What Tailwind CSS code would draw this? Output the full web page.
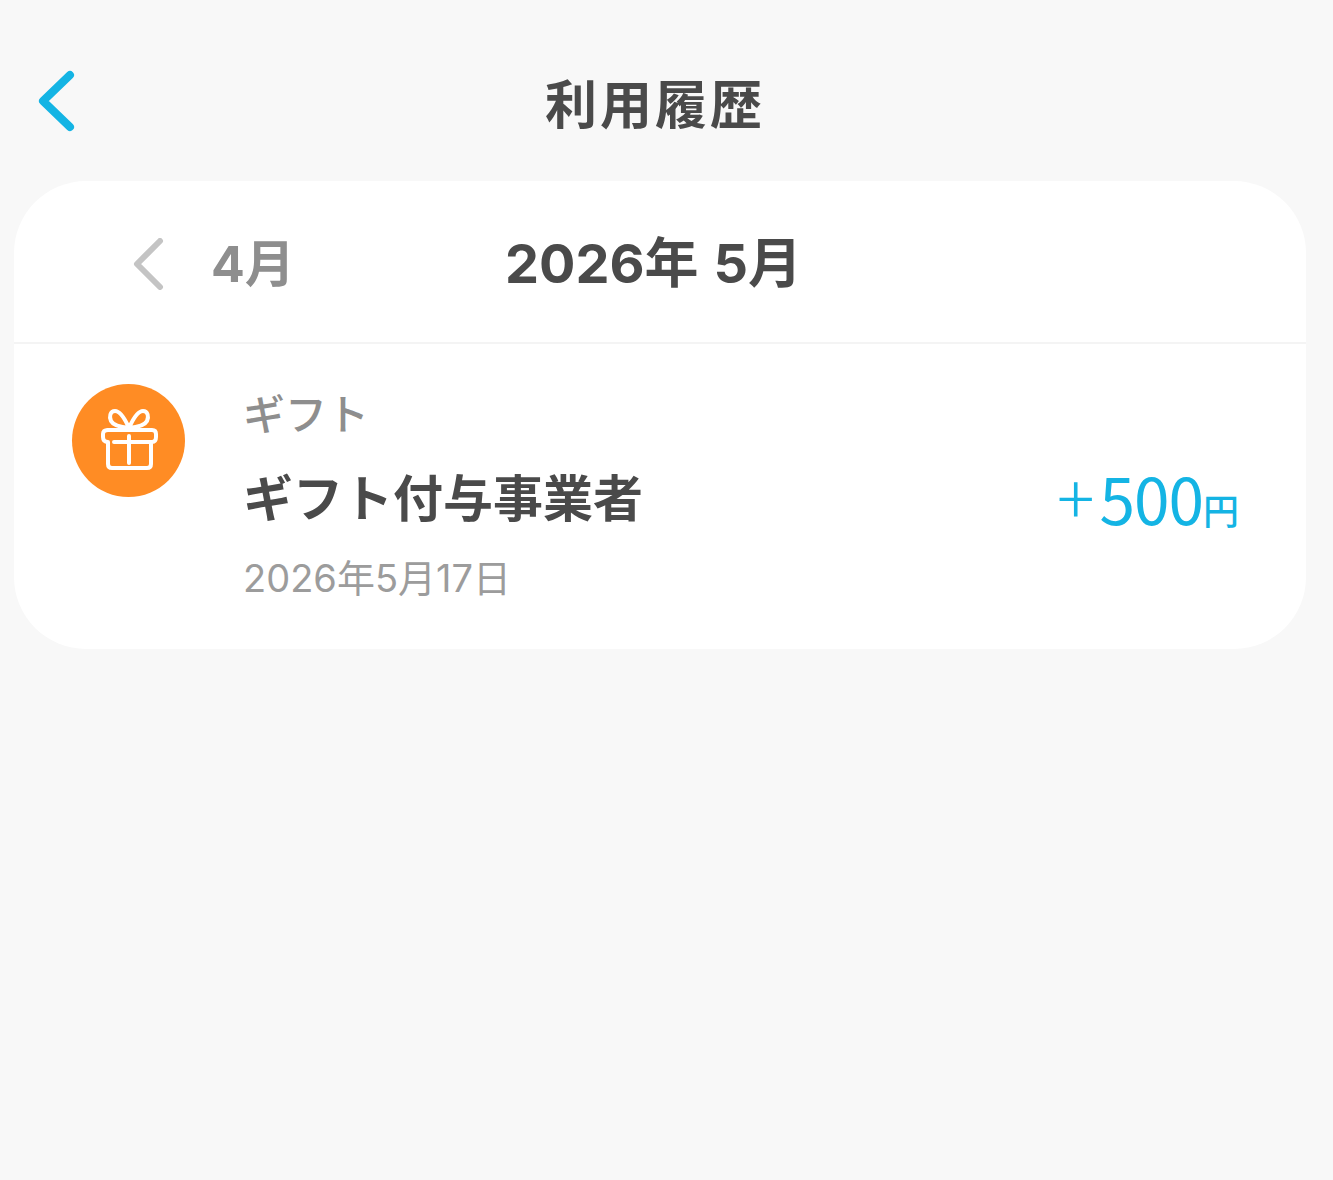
<!DOCTYPE html>
<html lang="ja">
<head>
  <meta charset="UTF-8">
  <meta name="viewport" content="width=device-width, initial-scale=1">
  <title>利用履歴</title>
  <script src="https://cdn.jsdelivr.net/npm/@tailwindcss/browser@4"></script>
</head>
<body class="bg-[#f8f8f8] font-['Inter','Noto_Sans_CJK_JP',sans-serif] text-[#4a4a4a] h-[1180px] overflow-hidden">

  <!-- Header -->
  <header class="relative h-[181px] pt-[71px] flex justify-center">
    <button class="absolute left-[38px] top-[70px]">
      <svg width="38" height="62" viewBox="0 0 38 62" fill="none" stroke="#14b4e4" stroke-width="8" stroke-linecap="round" stroke-linejoin="round"><path d="M32 5 L5 31 L32 57"/></svg>
    </button>
    <h1 class="text-[52px] leading-[70px] font-bold tracking-[3px] ml-[-23px]">利用履歴</h1>
  </header>

  <!-- Card -->
  <main class="mx-[14px] w-[1292px] h-[468px] bg-white rounded-[72px]">
    <div class="relative h-[163px] border-b-2 border-[#f4f4f4] flex justify-center items-center">
      <div class="absolute left-[119px] top-[57px] flex items-center gap-[46px]">
        <svg width="32" height="52" viewBox="0 0 32 52" fill="none" stroke="#c4c4c4" stroke-width="6" stroke-linecap="round" stroke-linejoin="round"><path d="M27 3 L4 26 L27 49"/></svg>
        <span class="text-[50px] leading-[52px] font-bold text-[#8e8e8e]">4月</span>
      </div>
      <span class="text-[54px] leading-[60px] font-bold ml-[-13px] mt-[4px] [word-spacing:2px]">2026年 5月</span>
    </div>
    <div class="flex pl-[58px] pt-[40px] pr-[67px]">
      <div class="relative w-[113px] h-[113px] rounded-full bg-[#ff8c24] shrink-0">
        <svg class="absolute left-[28px] top-[24px]" width="60" height="64" viewBox="0 0 60 64" fill="none" stroke="#fff" stroke-width="4" stroke-linecap="round" stroke-linejoin="round">
          <path d="M29 20 C25 11 20 3 15 3 C10 3 9 9 11 13 C13 17 20 19 29 20 C33 11 38 3 43 3 C48 3 49 9 47 13 C45 17 38 19 29 20Z"/>
          <path d="M8 22 H52 Q56 22 56 26 V29 Q56 34 52 34 H14"/>
          <path d="M8 22 Q3 22 3 26 V29 Q3 34 8 34 V56 Q8 60 12 60 H47 Q51 60 51 56 V34"/>
          <path d="M29 28 V55"/>
        </svg>
      </div>
      <div class="ml-[58px] flex-1">
        <p class="text-[42px] leading-[60px] font-medium text-[#8e8e8e] mt-[1px]">ギフト</p>
        <p class="mt-[18px] text-[50px] leading-[72px] font-bold">ギフト付与事業者</p>
        <p class="mt-[18px] text-[38px] leading-[50px] text-[#9c9c9c]">2026年5月17日</p>
      </div>
      <div class="self-start mt-[71px] text-[#14b4e4] flex items-baseline font-['Noto_Sans_CJK_JP',sans-serif]">
        <span class="text-[70px] leading-[80px] font-light mr-[5px]">+</span>
        <span class="text-[64px] leading-[80px] font-normal tracking-[-1px]">500</span>
        <span class="text-[36px] leading-[40px] font-medium">円</span>
      </div>
    </div>
  </main>

</body>
</html>
